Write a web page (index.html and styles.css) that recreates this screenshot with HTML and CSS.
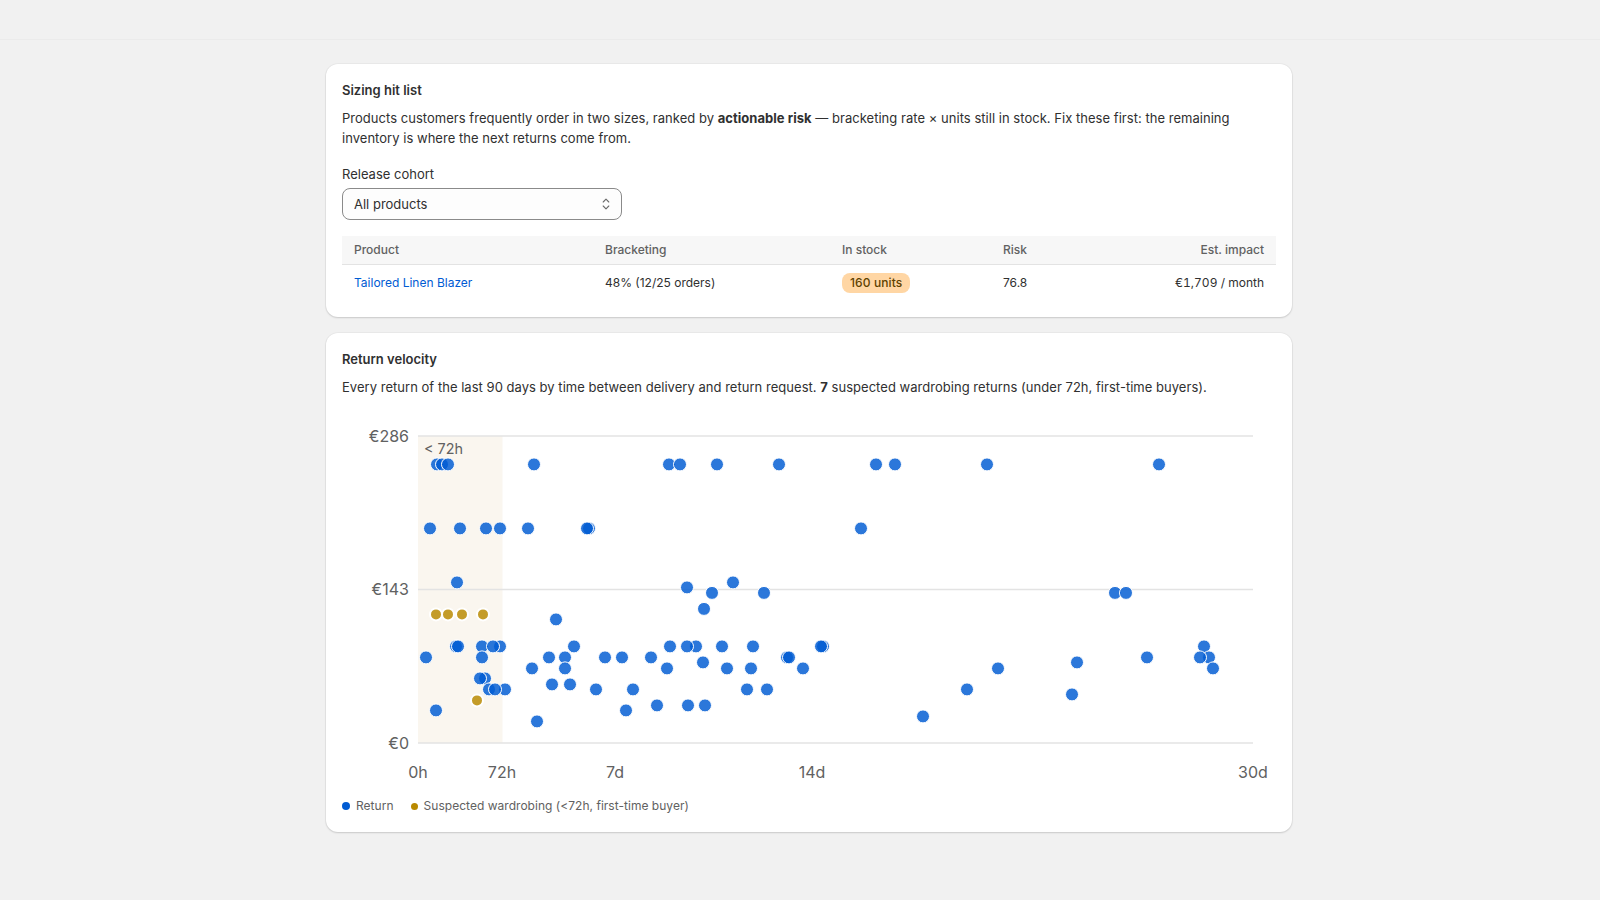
FILE: index.html
```html
<!DOCTYPE html>
<html lang="en">
<head>
  <meta charset="UTF-8">
  <title>Returns</title>
  <link rel="stylesheet" href="styles.css">
</head>
<body>
  <div class="topbar"></div>
  <main class="page">
    <section class="card">
      <h2 class="card-title">Sizing hit list</h2>
      <p class="card-text">Products customers frequently order in two sizes, ranked by <strong>actionable risk</strong> — bracketing rate × units still in stock. Fix these first: the remaining inventory is where the next returns come from.</p>
      <div class="field">
        <label for="cohort">Release cohort</label>
        <div class="select-wrap">
          <select id="cohort" class="select">
            <option>All products</option>
          </select>
          <svg class="select-icon" width="16" height="16" viewBox="0 0 16 16" fill="none" stroke="#6b6b6b" stroke-width="1.1" stroke-linecap="round" stroke-linejoin="round">
            <path d="M5.2 6 8 3.2 10.8 6"/>
            <path d="M5.2 10 8 12.8 10.8 10"/>
          </svg>
        </div>
      </div>
      <table class="table">
        <thead>
          <tr>
            <th class="col-product">Product</th>
            <th class="col-bracket">Bracketing</th>
            <th class="col-stock">In stock</th>
            <th class="col-risk">Risk</th>
            <th class="col-impact">Est. impact</th>
          </tr>
        </thead>
        <tbody>
          <tr>
            <td><a href="#" class="link">Tailored Linen Blazer</a></td>
            <td>48% (12/25 orders)</td>
            <td><span class="badge">160 units</span></td>
            <td>76.8</td>
            <td class="col-impact">€1,709 / month</td>
          </tr>
        </tbody>
      </table>
    </section>

    <section class="card">
      <h2 class="card-title">Return velocity</h2>
      <p class="card-text">Every return of the last 90 days by time between delivery and return request. <strong>7</strong> suspected wardrobing returns (under 72h, first-time buyers).</p>
      <svg class="chart" width="934" height="375" viewBox="342 413 934 375">
        <rect class="band" x="418" y="436" width="84.5" height="307"/>
        <line class="grid" x1="418" x2="1253" y1="436" y2="436"/>
        <line class="grid" x1="418" x2="1253" y1="589.5" y2="589.5"/>
        <line class="grid" x1="418" x2="1253" y1="743" y2="743"/>

        <text class="tick" x="409" y="442" text-anchor="end">€286</text>
        <text class="tick" x="409" y="595" text-anchor="end">€143</text>
        <text class="tick" x="409" y="749" text-anchor="end">€0</text>
        <text class="tick" x="418" y="778" text-anchor="middle">0h</text>
        <text class="tick" x="502" y="778" text-anchor="middle">72h</text>
        <text class="tick" x="615" y="778" text-anchor="middle">7d</text>
        <text class="tick" x="812" y="778" text-anchor="middle">14d</text>
        <text class="tick" x="1253" y="778" text-anchor="middle">30d</text>
        <text class="band-label" x="424" y="454">&lt; 72h</text>

        <g class="dots" transform="translate(0 0.4)">
          <circle cx="437" cy="464"/><circle cx="442" cy="464"/><circle cx="448" cy="464"/>
          <circle cx="534" cy="464"/><circle cx="669" cy="464"/><circle cx="680" cy="464"/>
          <circle cx="717" cy="464"/><circle cx="779" cy="464"/><circle cx="876" cy="464"/>
          <circle cx="895" cy="464"/><circle cx="987" cy="464"/><circle cx="1159" cy="464"/>

          <circle cx="430" cy="528"/><circle cx="460" cy="528"/><circle cx="486" cy="528"/>
          <circle cx="500" cy="528"/><circle cx="528" cy="528"/><circle cx="589" cy="528"/>
          <circle cx="587" cy="528"/><circle cx="861" cy="528"/>

          <circle cx="457" cy="582"/><circle cx="733" cy="582"/><circle cx="687" cy="587"/>
          <circle cx="712" cy="592.5"/><circle cx="764" cy="592.5"/><circle cx="1115" cy="592.5"/>
          <circle cx="1126" cy="592.5"/><circle cx="704" cy="608.5"/><circle cx="556" cy="619"/>

          <circle cx="456" cy="646"/><circle cx="458" cy="646"/><circle cx="500" cy="646"/>
          <circle cx="482" cy="646"/><circle cx="493" cy="646"/><circle cx="574" cy="646"/>
          <circle cx="670" cy="646"/><circle cx="696" cy="646"/><circle cx="687" cy="646"/>
          <circle cx="722" cy="646"/><circle cx="753" cy="646"/><circle cx="823" cy="646"/>
          <circle cx="821" cy="646"/><circle cx="1204" cy="646"/>

          <circle cx="426" cy="657"/><circle cx="482" cy="657"/><circle cx="549" cy="657"/>
          <circle cx="565" cy="657"/><circle cx="605" cy="657"/><circle cx="622" cy="657"/>
          <circle cx="651" cy="657"/><circle cx="787" cy="657"/><circle cx="789" cy="657"/>
          <circle cx="1147" cy="657"/><circle cx="1209" cy="657"/><circle cx="1200" cy="657"/>

          <circle cx="703" cy="662"/><circle cx="1077" cy="662"/>

          <circle cx="532" cy="668"/><circle cx="565" cy="668"/><circle cx="667" cy="668"/>
          <circle cx="727" cy="668"/><circle cx="751" cy="668"/><circle cx="803" cy="668"/>
          <circle cx="998" cy="668"/><circle cx="1213" cy="668"/>

          <circle cx="485" cy="678"/><circle cx="480" cy="678"/>
          <circle cx="552" cy="684"/><circle cx="570" cy="684"/>

          <circle cx="489" cy="689"/><circle cx="505" cy="689"/><circle cx="495" cy="689"/>
          <circle cx="596" cy="689"/><circle cx="633" cy="689"/><circle cx="747" cy="689"/>
          <circle cx="767" cy="689"/><circle cx="967" cy="689"/>

          <circle cx="1072" cy="694"/>
          <circle cx="657" cy="705"/><circle cx="688" cy="705"/><circle cx="705" cy="705"/>
          <circle cx="436" cy="710"/><circle cx="626" cy="710"/>
          <circle cx="923" cy="716"/><circle cx="537" cy="721"/>
        </g>
        <g class="dots-flagged" transform="translate(0 0.4)">
          <circle cx="436" cy="614"/><circle cx="448" cy="614"/><circle cx="462" cy="614"/>
          <circle cx="483" cy="614"/><circle cx="477" cy="700"/>
        </g>
      </svg>
      <div class="legend">
        <span class="legend-item"><i class="legend-dot legend-dot-return"></i>Return</span>
        <span class="legend-item"><i class="legend-dot legend-dot-flagged"></i>Suspected wardrobing (&lt;72h, first-time buyer)</span>
      </div>
    </section>
  </main>
</body>
</html>
```

FILE: styles.css
```css
* {
  box-sizing: border-box;
}
body {
  margin: 0;
  background-color: #f1f1f1;
  color: #303030;
  font-family: Inter, "Noto Sans", sans-serif;
  font-size: 13px;
  line-height: 20px;
}
.topbar {
  height: 40px;
  border-bottom: 1px solid #ebebeb;
}
.page {
  width: 966px;
  margin-left: 326px;
  padding: 24px 0;
  display: flex;
  flex-direction: column;
  gap: 16px;
}
.card {
  background-color: #fff;
  border-radius: 12px;
  padding: 16px;
  box-shadow: 0 0 0 1px rgba(0, 0, 0, 0.03), 0 1px 2px rgba(0, 0, 0, 0.14);
}
.card-title {
  margin: 0 0 8px;
  font-size: 13px;
  line-height: 20px;
  font-weight: 600;
}
.card-text {
  margin: 0;
  letter-spacing: 0.03px;
}
.card-text strong {
  font-weight: 650;
}

/* cohort select */
.field {
  margin-top: 16px;
  width: 280px;
}
.field label {
  display: block;
  margin-bottom: 4px;
}
.select-wrap {
  position: relative;
}
.select {
  display: block;
  width: 100%;
  height: 32px;
  padding: 0 11px;
  appearance: none;
  border: 1px solid #8a8a8a;
  border-radius: 8px;
  background-color: #fdfdfd;
  color: #303030;
  font-family: inherit;
  font-size: 13px;
}
.select-icon {
  position: absolute;
  top: 8px;
  right: 8px;
  pointer-events: none;
}

/* table */
.table {
  width: 100%;
  margin-top: 16px;
  border-collapse: collapse;
  table-layout: fixed;
  font-size: 12px;
  line-height: 16px;
}
.table th {
  height: 28px;
  padding: 0 12px;
  background-color: #f7f7f7;
  border-bottom: 1px solid #e3e3e3;
  color: #616161;
  font-weight: 550;
  text-align: left;
}
.table td {
  height: 37px;
  padding: 0 12px;
}
.table .col-impact {
  text-align: right;
}
.table td.col-impact {
  font-variant-numeric: tabular-nums;
}
.col-product {
  width: 251px;
}
.col-bracket {
  width: 237px;
}
.col-stock {
  width: 161px;
}
.col-risk {
  width: 100px;
}
.link {
  color: #005bd3;
  text-decoration: none;
}
.badge {
  display: inline-block;
  height: 20px;
  padding: 2px 8px;
  border-radius: 8px;
  background-color: #ffd6a4;
  color: #5e4200;
  font-weight: 550;
  letter-spacing: 0.1px;
}

/* chart */
.chart {
  display: block;
  margin-top: 16px;
}
.band {
  fill: #faf6ef;
}
.grid {
  stroke: #e3e3e3;
  stroke-width: 1.5;
}
.tick {
  fill: #616161;
  font-size: 16px;
}
.band-label {
  fill: #616161;
  font-size: 14.4px;
}
.dots circle {
  r: 6.5px;
  fill: #005bd3;
  fill-opacity: 0.83;
  stroke: #fff;
  stroke-width: 1;
}
.dots-flagged circle {
  r: 6px;
  fill: #b98900;
  fill-opacity: 0.83;
  stroke: #fff;
  stroke-width: 2;
}
.legend {
  display: flex;
  gap: 17px;
  margin-top: 8px;
  color: #616161;
  font-size: 12px;
  letter-spacing: 0.03px;
}
.legend-item {
  display: flex;
  align-items: center;
  gap: 6px;
}
.legend-dot {
  width: 8px;
  height: 8px;
  border-radius: 50%;
}
.legend-dot-return {
  background-color: #005bd3;
}
.legend-dot-flagged {
  width: 7px;
  height: 7px;
  background-color: #b98900;
}
```
